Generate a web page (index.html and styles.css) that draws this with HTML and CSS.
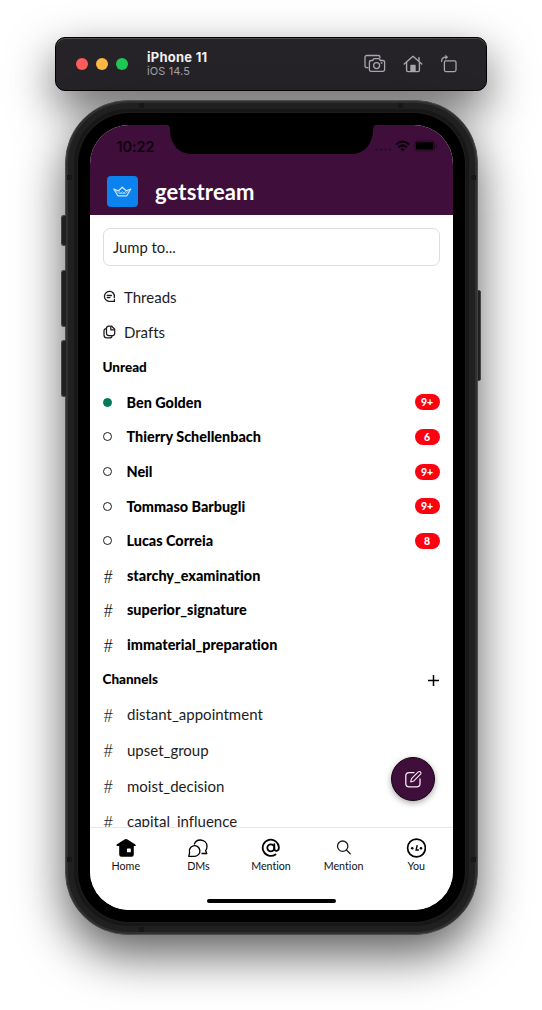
FILE: index.html
```html
<!DOCTYPE html>
<html lang="en">
<head>
<meta charset="utf-8">
<title>getstream</title>
<link rel="stylesheet" href="styles.css">
</head>
<body>
<div class="stage">
  <header class="toolbar">
    <div class="lights"><i class="light red"></i><i class="light yellow"></i><i class="light green"></i></div>
    <div class="device"><div class="device-name">iPhone 11</div><div class="device-os">iOS 14.5</div></div>
    <div class="tools">
      <svg width="22" height="20" viewBox="0 0 22 20" fill="none" stroke="#a9a6ac" stroke-width="1.3" stroke-linejoin="round"><path d="M4.5 13.7H2.8A1.8 1.8 0 0 1 1 11.900V3.300A1.800 1.800 0 0 1 2.800 1.500H14.200A1.800 1.800 0 0 1 16 3.300V4.300"/><path d="M7 6.500H8.600L9.900 4.700H15.100L16.400 6.500H19A1.600 1.600 0 0 1 20.600 8.100V15.700A1.600 1.600 0 0 1 19 17.300H7A1.600 1.600 0 0 1 5.400 15.700V8.100A1.600 1.600 0 0 1 7 6.500Z"/><circle cx="12.600" cy="11.600" r="3"/><circle cx="17.600" cy="9" r=".3"/></svg>
      <svg width="20" height="20" viewBox="0 0 20 20" fill="none" stroke="#a9a6ac" stroke-width="1.400" stroke-linejoin="round" stroke-linecap="round"><path d="M1.200 10 10 2.200 18.800 10"/><path d="M3.600 8.600V16.200Q3.600 17.600 5 17.600H15Q16.400 17.600 16.400 16.200V8.600"/><path d="M16 6.600V3.600"/><path d="M8 17V11.500H12V17Z" fill="#a9a6ac"/></svg>
      <svg width="18" height="20" viewBox="0 0 18 20" fill="none" stroke="#a9a6ac" stroke-width="1.300" stroke-linejoin="round" stroke-linecap="round"><rect x="4.400" y="6.900" width="11.600" height="10.700" rx="1.500"/><path d="M1.700 7.400C1.500 4.700 3 3.200 6 3.200"/><path d="M5.700 1.300 7.900 3.200 5.700 5.100Z" fill="#a9a6ac" stroke-width=".5"/></svg>
    </div>
  </header>

  <main class="phone">
    <i class="side-button mute"></i><i class="side-button vol-up"></i><i class="side-button vol-down"></i><i class="side-button power"></i>
    <i class="seam v top-left"></i><i class="seam v top-right"></i><i class="seam v bottom-left"></i><i class="seam h left-top"></i><i class="seam h right-top"></i><i class="seam h left-bottom"></i><i class="seam h right-bottom"></i>
    <div class="bezel">
      <div class="screen">
        <svg class="notch" width="215" height="30" viewBox="0 0 215 30"><path d="M0-1H215V0H212Q209 0 209 5C208.500 19 201 29 187 29H28C14 29 6.500 19 6 5Q6 0 3 0H0Z"/></svg>
        <div class="app-head">
          <div class="status">
            <span class="time">10:22</span>
            <svg width="64" height="14" viewBox="0 0 64 14"><g fill="#280a27"><circle cx="2.500" cy="10.500" r="1.100"/><circle cx="7" cy="10.500" r="1.100"/><circle cx="11.500" cy="10.500" r="1.100"/><circle cx="16" cy="10.500" r="1.100"/></g><g fill="none" stroke="#090209" stroke-width="2"><path d="M22.200 5.600Q28.700-.5 35.200 5.600"/><path d="M24.600 8.200Q28.700 4.500 32.800 8.200"/></g><path d="M26.500 10.200Q28.700 8.500 30.900 10.200L28.700 12.300Z" fill="#090209"/><rect x="40.800" y="2" width="19.700" height="9.800" rx="2.600" fill="none" stroke="#270923"/><rect x="42" y="3.200" width="17.300" height="7.400" rx="1.300"/><path d="M61.700 5.200Q63.300 5.600 63.300 7T61.700 8.600Z" fill="#270923"/></svg>
          </div>
          <div class="brand">
            <div class="logo"><svg width="21" height="12" viewBox="0 0 21 12" fill="none" stroke="#cfe7ff" stroke-width="1.200" stroke-linejoin="round"><path d="M1.800 3 5.800 9.800H14.800L18.800 3 14.200 4.700 10.300 1.200 6.500 4.700Z"/><path d="M3.300 4.200 7 7.400H13.600L17.300 4.200M6.600 4.800 8.600 7.200 10.300 5.700 12 7.200 14 4.800" stroke-width=".7"/></svg></div>
            <h1>getstream</h1>
          </div>
        </div>
        <div class="content">
          <div class="jump">Jump to...</div>
          <div class="row shortcut"><svg width="13" height="13" viewBox="0 0 13 13" fill="none" stroke="#1d1c1d" stroke-width="1.300" stroke-linecap="round" stroke-linejoin="round"><path d="M11.300 7.500A5 5 0 1 0 6.200 11.400H11.400V9.500M11.300 7.500Q11.800 4.800 10.300 3"/><path d="M4.200 5.500H8.400M4.200 7.600H7"/></svg><span>Threads</span></div>
          <div class="row shortcut"><svg width="13" height="14" viewBox="0 0 13 14" fill="none" stroke="#1d1c1d" stroke-width="1.250" stroke-linejoin="round"><path d="M5.700 1H8.500L11.700 4.200V8.400A2.200 2.200 0 0 1 9.500 10.600H5.700A2.200 2.200 0 0 1 3.500 8.400V3.200A2.200 2.200 0 0 1 5.700 1Z"/><path d="M7.800 1.400V4.800H11.300M3.500 3.500Q1 3.500 1 5.800V10Q1 12.900 4 12.900H6.500Q8.700 12.900 9 10.800"/></svg><span>Drafts</span></div>
          <div class="row heading">Unread</div>
          <div class="row dm"><i class="dot on"></i><b>Ben Golden</b><em>9+</em></div>
          <div class="row dm"><i class="dot"></i><b>Thierry Schellenbach</b><em>6</em></div>
          <div class="row dm"><i class="dot"></i><b>Neil</b><em>9+</em></div>
          <div class="row dm"><i class="dot"></i><b>Tommaso Barbugli</b><em>9+</em></div>
          <div class="row dm"><i class="dot"></i><b>Lucas Correia</b><em>8</em></div>
          <div class="row unread"><span class="hash">#</span><b>starchy_examination</b></div>
          <div class="row unread"><span class="hash">#</span><b>superior_signature</b></div>
          <div class="row unread"><span class="hash">#</span><b>immaterial_preparation</b></div>
          <div class="row heading">Channels<svg class="plus" width="13" height="13" viewBox="0 0 13 13" stroke="#000" stroke-width="1.500"><path d="M1 6.500H12M6.500 1V12"/></svg></div>
          <div class="row channel"><span class="hash">#</span><span>distant_appointment</span></div>
          <div class="row channel"><span class="hash">#</span><span>upset_group</span></div>
          <div class="row channel"><span class="hash">#</span><span>moist_decision</span></div>
          <div class="row channel"><span class="hash">#</span><span>capital_influence</span></div>
        </div>
        <div class="compose"><svg width="19" height="19" viewBox="0 0 19 19" fill="none" stroke="#f2eaf1" stroke-width="1.300" stroke-linecap="round" stroke-linejoin="round"><path d="M10 2.600H5.200Q1.800 2.600 1.800 6V13.400Q1.800 16.800 5.200 16.800H12.600Q16 16.800 16 13.400V8.800"/><path stroke-width="1.100" d="M6.700 11.900 7.500 8.700 14.300 1.900Q15.500 1 16.500 2T16.600 4.200L9.900 10.900Z"/></svg></div>
        <nav class="tabs">
          <div class="tab"><svg width="22" height="20" viewBox="0 0 22 20"><path d="M11 1 12.500 1.600 20 6.200Q21.100 7 20.600 8H18.800V16.500Q18.800 18.700 16.600 18.700H6.400Q4.200 18.700 4.200 16.500V8H1.800Q1 7 2 6.200L9.500 1.600Z"/><rect x="12" y="10.500" width="3.800" height="3.800" rx=".5" fill="#fff"/></svg><span>Home</span></div>
          <div class="tab"><svg width="22" height="20" viewBox="0 0 22 20" fill="none" stroke="#000" stroke-width="1.300" stroke-linejoin="round"><path d="M7.200 6.500C8.300 3.200 11 1.900 13.500 2C17.500 2.200 20 5 20 8.400C20 10 19.500 11.400 18.600 12.500L19.800 15.500H14.500"/><path d="M1.800 18.300H7.800A5.300 5.300 0 1 0 2.600 14.700Z"/></svg><span>DMs</span></div>
          <div class="tab"><svg width="20" height="20" viewBox="0 0 20 20" fill="none" stroke="#000" stroke-width="1.800" stroke-linecap="round"><circle cx="9.800" cy="9.800" r="3.500"/><path d="M13.300 6.200V10.500C13.300 14 17.900 13.500 17.900 9.500A8.100 8.100 0 1 0 14.500 16.400"/></svg><span>Mention</span></div>
          <div class="tab"><svg width="20" height="20" viewBox="0 0 20 20" fill="none" stroke="#1d1c1d" stroke-width="1.300" stroke-linecap="round"><circle cx="8.700" cy="8.200" r="5.200"/><path d="M12.500 12 16.200 15.700"/></svg><span>Mention</span></div>
          <div class="tab"><svg width="20" height="20" viewBox="0 0 20 20" fill="none" stroke="#000" stroke-width="1.700"><circle cx="10.500" cy="10" r="8.900"/><path d="M11.200 7.200 10.100 12H12.900" stroke-width="1.400"/><g fill="#000" stroke="none"><circle cx="6.200" cy="10.200" r="1.300"/><circle cx="15" cy="10.200" r="1.300"/></g></svg><span>You</span></div>
        </nav>
        <i class="home-bar"></i>
      </div>
    </div>
  </main>
</div>
</body>
</html>
```
FILE: styles.css
```css
* { box-sizing: border-box; }
body { margin: 0; background: #fff; font-family: Lato, "Open Sans", sans-serif; font-variant-ligatures: none; color: #1d1c1d; }
i, em { font-style: normal; }
svg { display: block; flex: none; }
.stage { width: 542px; height: 1010px; overflow: hidden; padding-top: 37px; display: flex; flex-direction: column; align-items: center; gap: 9px; }

.toolbar { width: 432px; height: 54px; flex: none; display: flex; align-items: center; padding: 0 28px 0 21px; background: #252228; border: 1px solid #000; border-radius: 10px; box-shadow: inset 0 1px #4c4a4e, 0 18px 46px rgba(0,0,0,.6); }
.lights { display: flex; gap: 8px; margin-left: -1px; }
.light { width: 12px; height: 12px; border-radius: 50%; }
.red { background: #ff5b5b; }
.yellow { background: #ffb843; }
.green { background: #20c653; }
.device { margin-left: 19px; font-family: Inter, sans-serif; }
.device-name { font-size: 13px; line-height: 15px; font-weight: 700; letter-spacing: .25px; color: #f0eff1; }
.device-os { font-size: 11px; line-height: 13px; letter-spacing: .1px; color: #a5a2a8; }
.tools { display: flex; gap: 17px; margin-left: auto; }

.phone { position: relative; width: 413px; height: 835px; flex: none; padding: 12px; border: 1px solid #4d4d4d; border-radius: 63px; background: #1d1d1d; box-shadow: inset 0 0 0 2px #303030, inset 0 0 0 8px #202020, inset 0 0 0 11px #171717, 0 20px 48px rgba(0,0,0,.63); }
.bezel { height: 100%; padding: 12px; background: #000; border-radius: 51px; }
.screen { position: relative; width: 363px; height: 785px; overflow: hidden; border-radius: 39px; background: #fff; display: flex; flex-direction: column; }
.side-button { position: absolute; background: #202020; border: 1px solid #444; }
.mute, .vol-up, .vol-down { left: -5px; width: 5px; border-radius: 3px 0 0 3px; border-right: 0; }
.mute { top: 114px; height: 31px; }
.vol-up { top: 169px; height: 57px; }
.vol-down { top: 239px; height: 57px; }
.power { right: -4px; top: 189px; width: 4px; height: 91px; border-radius: 0 2px 2px 0; }
.seam { position: absolute; background: #171717; }
.v { width: 5px; height: 5px; }
.h { width: 5px; height: 5px; }
.top-left { top: 2px; left: 73px; }
.top-right { top: 2px; right: 74px; }
.bottom-left { bottom: 2px; left: 73px; }
.left-top { left: 1px; top: 74px; }
.right-top { right: 1px; top: 74px; }
.left-bottom { left: 1px; bottom: 72px; }
.right-bottom { right: 1px; bottom: 72px; }

.notch { position: absolute; left: 74px; top: 0; }
.app-head { height: 90px; flex: none; background: #3f0e3b; }
.status { height: 44px; padding: 0 15px 1px 27px; display: flex; align-items: center; justify-content: space-between; }
.time { font: 600 14.5px Inter, sans-serif; letter-spacing: -.1px; color: #0d020c; }
.status svg { margin-top: -1px; }
.brand { display: flex; align-items: center; gap: 17px; padding: 6px 17.5px 0; height: 39px; }
.logo { width: 31px; height: 31px; border-radius: 4px; background: #0b82ee; display: flex; align-items: center; justify-content: center; }
h1 { margin: 0; font-size: 22px; line-height: 30px; font-weight: 700; letter-spacing: .15px; color: #fff; }

.content { height: 612px; flex: none; overflow: hidden; padding: 13px 13px 0; }
.jump { height: 38px; margin-bottom: 13px; padding: 0 9.5px; border: 1px solid #ddd; border-radius: 7px; font-size: 14.8px; line-height: 37px; color: #1d1c1d; }
.row { display: flex; align-items: center; height: 34.7px; font-size: 14.4px; color: #000; }
.shortcut, .channel { height: 35.6px; font-size: 15px; color: #1d1c1d; }
.channel span:last-child, .unread b { position: relative; top: -.5px; }
.shortcut { gap: 8.500px; }
.heading { font-size: 13.5px; font-weight: 900; padding-bottom: 2px; }
.plus { margin-left: auto; position: relative; top: 2px; }
.row b { font-weight: 900; }
.dot { width: 9px; height: 9px; margin-right: 15px; border: 1px solid #1d1c1d; border-radius: 50%; }
.dot.on { background: #007a5a; border-color: #007a5a; }
.dm em { margin-left: auto; width: 25px; height: 16px; border-radius: 8px; background: #ff0010; color: #fff; font-size: 10.5px; line-height: 16px; font-weight: 900; text-align: center; }
.hash { width: 24.500px; padding-left: .5px; font-size: 18px; font-weight: 300; }

.compose { position: absolute; left: 301.5px; top: 632px; width: 44px; height: 44px; border: 1px solid #15060f; border-radius: 50%; background: #3f0e3b; box-shadow: 0 2px 6px rgba(0,0,0,.35); display: flex; align-items: center; justify-content: center; }
.tabs { height: 83px; flex: none; display: flex; border-top: 1px solid #e8e8e8; padding-top: 10px; background: #fff; }
.tab { flex: 1; display: flex; flex-direction: column; align-items: center; font-size: 10.7px; line-height: 15px; color: #111; }
.home-bar { position: absolute; left: 117px; bottom: 7px; width: 129px; height: 4px; border-radius: 2px; background: #000; }
```
